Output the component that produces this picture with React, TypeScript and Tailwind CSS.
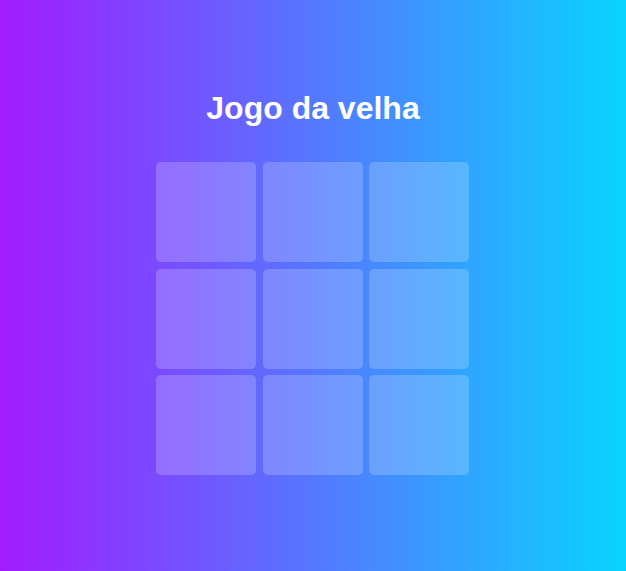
export default function App() {
  const cells = Array.from({ length: 9 }, (_, i) => i)

  return (
    <div className="min-h-screen w-full bg-[linear-gradient(to_right,#a21bff,#08d4ff)] flex flex-col items-center pt-[90px] font-['Liberation_Sans',Arial,sans-serif]">
      <h1 className="text-[32px] leading-[37px] font-bold text-white mb-[35px]">Jogo da velha</h1>
      <div className="grid grid-cols-[repeat(3,100px)] gap-[6.5px] mr-[1px]">
        {cells.map(i => (
          <button key={i} className="w-[100px] h-[100px] rounded-[5px] bg-white/20" />
        ))}
      </div>
    </div>
  )
}
